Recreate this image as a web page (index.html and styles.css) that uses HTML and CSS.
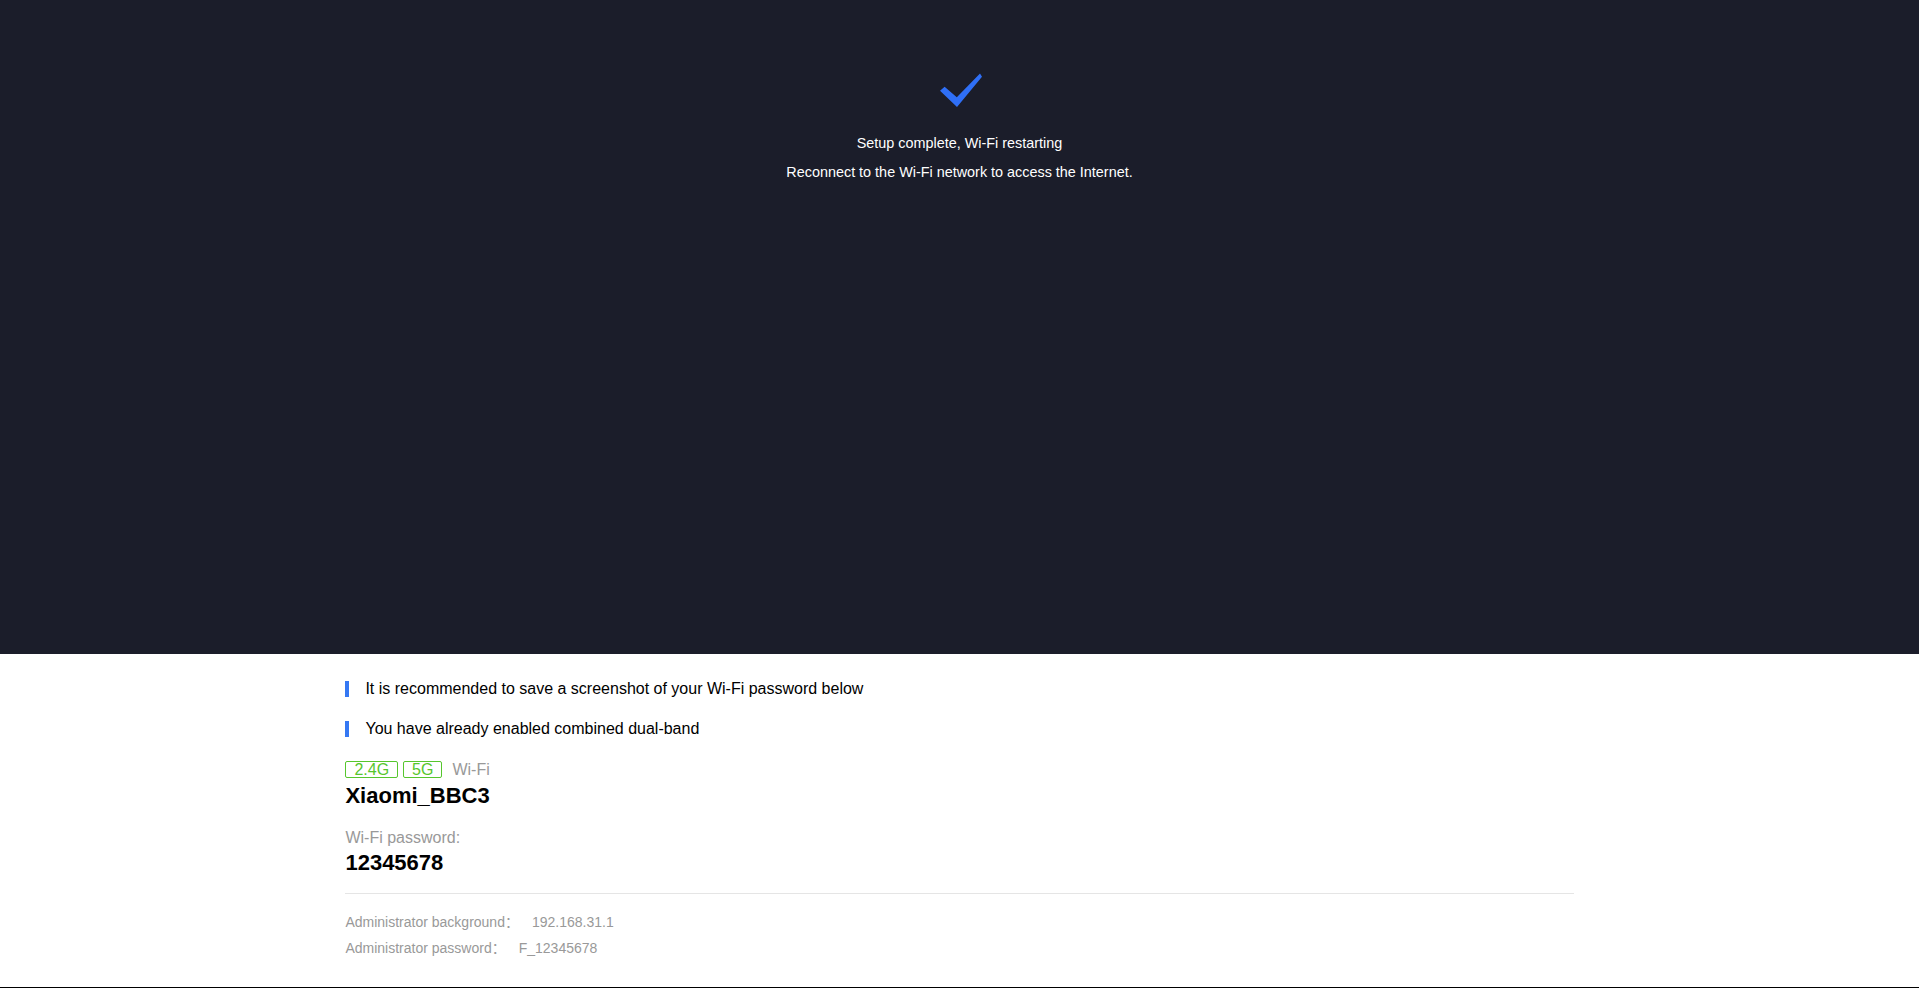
FILE: index.html
```html
<!DOCTYPE html>
<html lang="en">
<head>
<meta charset="utf-8">
<title>Setup complete</title>
<link rel="stylesheet" href="styles.css">
</head>
<body>
<div class="page">
  <section class="hero">
    <svg class="check" viewBox="0 0 42 34" width="42" height="34" aria-hidden="true">
      <path d="M0 17.8 L4.6 13.8 L16.8 24.2 L40 0.6 L42 3.8 L17 34 Z" fill="#2f6ff6"/>
    </svg>
    <p class="hero-title">Setup complete, Wi-Fi restarting</p>
    <p class="hero-sub">Reconnect to the Wi-Fi network to access the Internet.</p>
  </section>
  <section class="info">
    <div class="info-inner">
      <div class="tip">It is recommended to save a screenshot of your Wi-Fi password below</div>
      <div class="tip">You have already enabled combined dual-band</div>
      <div class="bands">
        <span class="tag">2.4G</span>
        <span class="tag">5G</span>
        <span class="band-label">Wi-Fi</span>
      </div>
      <div class="ssid">Xiaomi_BBC3</div>
      <div class="field-label">Wi-Fi password:</div>
      <div class="password">12345678</div>
      <div class="divider"></div>
      <div class="admin">
        <div class="admin-row"><span class="admin-key">Administrator background：</span><span class="admin-val">192.168.31.1</span></div>
        <div class="admin-row"><span class="admin-key">Administrator password：</span><span class="admin-val">F_12345678</span></div>
      </div>
    </div>
  </section>
</div>
</body>
</html>
```
FILE: styles.css
```css
* { box-sizing: border-box; }
html, body {
  margin: 0;
  padding: 0;
  height: 100%;
}
body {
  font-family: "Liberation Sans", Arial, "Noto Sans CJK SC", sans-serif;
  background: #ffffff;
  color: #000;
}
.page {
  display: flex;
  flex-direction: column;
  height: 100vh;
}
.hero {
  height: 654px;
  flex: none;
  background: #1b1d2a;
  display: flex;
  flex-direction: column;
  align-items: center;
  padding-top: 73px;
}
.check {
  display: block;
  margin-left: 2px;
}
.hero-title,
.hero-sub {
  margin: 0;
  color: #ffffff;
  font-size: 14.4px;
  line-height: 20px;
}
.hero-title { margin-top: 26px; }
.hero-sub { margin-top: 9px; }

.info {
  flex: 1;
  border-bottom: 1px solid #000;
}
.info-inner {
  width: 64%;
  margin: 0 auto;
  padding-top: 27px;
}
.tip {
  position: relative;
  font-size: 16px;
  line-height: 16px;
  height: 16px;
  padding-left: 20px;
  margin-bottom: 24px;
  color: #000;
}
.tip::before {
  content: "";
  position: absolute;
  left: 0;
  top: 0;
  width: 4px;
  height: 16px;
  background: #3578f3;
}
.bands {
  display: flex;
  align-items: center;
  gap: 5px;
  height: 17px;
}
.tag {
  border: 1px solid #56c62d;
  color: #56c62d;
  border-radius: 2px;
  font-size: 16px;
  line-height: 15px;
  height: 17px;
  padding: 0 8px;
}
.band-label {
  margin-left: 5px;
  color: #999999;
  font-size: 16px;
  line-height: 17px;
}
.ssid {
  margin-top: 5px;
  font-size: 22px;
  line-height: 26px;
  font-weight: bold;
}
.field-label {
  margin-top: 19px;
  font-size: 16px;
  line-height: 20px;
  color: #999999;
}
.password {
  margin-top: 2px;
  font-size: 22px;
  line-height: 26px;
  font-weight: bold;
}
.divider {
  margin-top: 17px;
  height: 1px;
  background: #e5e5e5;
}
.admin {
  padding-top: 15px;
}
.admin-row {
  font-size: 14px;
  line-height: 26px;
  color: #999999;
}
.admin-key {
  margin-right: 13px;
}
```
